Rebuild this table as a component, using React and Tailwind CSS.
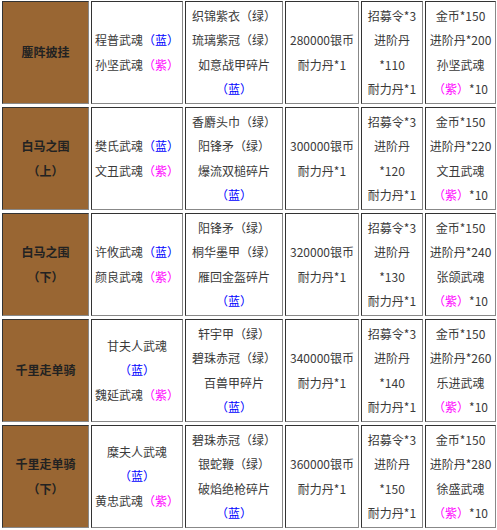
import React from "react";

const T = ({ s }) => {
  const parts = s.split(/([（）])/);
  return (
    <>
      {parts.map((p, i) =>
        p === "（" || p === "）" ? (
          <span key={i} className="font-['Noto_Sans_CJK_TC',sans-serif]">
            {p}
          </span>
        ) : (
          <React.Fragment key={i}>{p}</React.Fragment>
        )
      )}
    </>
  );
};

const B = () => (
  <span className="text-[#0000ff]">
    <T s="（蓝）" />
  </span>
);
const P = () => (
  <span className="text-[#ff00ff]">
    <T s="（紫）" />
  </span>
);

const rows = [
  {
    title: ["鏖阵披挂"],
    c2: [<>程普武魂<B /></>, <>孙坚武魂<P /></>],
    c3: ["织锦紫衣（绿）", "琉璃紫冠（绿）", "如意战甲碎片", <B />],
    c4: ["280000银币", "耐力丹*1"],
    c5: ["招募令*3", "进阶丹", "*110", "耐力丹*1"],
    c6: ["金币*150", "进阶丹*200", "孙坚武魂", <><P />*10</>],
  },
  {
    title: ["白马之围", "（上）"],
    c2: [<>樊氏武魂<B /></>, <>文丑武魂<P /></>],
    c3: ["香麝头巾（绿）", "阳锋矛（绿）", "爆流双槌碎片", <B />],
    c4: ["300000银币", "耐力丹*1"],
    c5: ["招募令*3", "进阶丹", "*120", "耐力丹*1"],
    c6: ["金币*150", "进阶丹*220", "文丑武魂", <><P />*10</>],
  },
  {
    title: ["白马之围", "（下）"],
    c2: [<>许攸武魂<B /></>, <>颜良武魂<P /></>],
    c3: ["阳锋矛（绿）", "桐华墨甲（绿）", "雁回金盔碎片", <B />],
    c4: ["320000银币", "耐力丹*1"],
    c5: ["招募令*3", "进阶丹", "*130", "耐力丹*1"],
    c6: ["金币*150", "进阶丹*240", "张颌武魂", <><P />*10</>],
  },
  {
    title: ["千里走单骑"],
    c2: ["甘夫人武魂", <B />, <>魏延武魂<P /></>],
    c3: ["轩宇甲（绿）", "碧珠赤冠（绿）", "百兽甲碎片", <B />],
    c4: ["340000银币", "耐力丹*1"],
    c5: ["招募令*3", "进阶丹", "*140", "耐力丹*1"],
    c6: ["金币*150", "进阶丹*260", "乐进武魂", <><P />*10</>],
  },
  {
    title: ["千里走单骑", "（下）"],
    c2: ["糜夫人武魂", <B />, <>黄忠武魂<P /></>],
    c3: ["碧珠赤冠（绿）", "银蛇鞭（绿）", "破焰绝枪碎片", <B />],
    c4: ["360000银币", "耐力丹*1"],
    c5: ["招募令*3", "进阶丹", "*150", "耐力丹*1"],
    c6: ["金币*150", "进阶丹*280", "徐盛武魂", <><P />*10</>],
  },
];

const Cell = ({ lines, title }) => (
  <div
    className={
      "h-[103px] flex flex-col items-center justify-center text-center border border-t-[#333] border-l-[#333] border-b-[#888] border-r-[#888] " +
      (title ? "bg-[#996633] font-bold text-[#222]" : "bg-white text-[#3a3a3a]")
    }
  >
    {lines.map((l, i) => (
      <div key={i} className="leading-[24.5px] whitespace-nowrap">
        {typeof l === "string" ? <T s={l} /> : l}
      </div>
    ))}
  </div>
);

export default function App() {
  return (
    <div className="w-[497px] h-[530px] bg-white font-['Noto_Sans_CJK_SC',sans-serif] text-[12px]">
      <div className="pl-[2px] pt-[1px] grid grid-cols-[87px_92px_98px_74px_62px_71px] gap-x-[2px] gap-y-[3px]">
        {rows.map((r, i) => (
          <React.Fragment key={i}>
            <Cell lines={r.title} title />
            <Cell lines={r.c2} />
            <Cell lines={r.c3} />
            <Cell lines={r.c4} />
            <Cell lines={r.c5} />
            <Cell lines={r.c6} />
          </React.Fragment>
        ))}
      </div>
    </div>
  );
}
